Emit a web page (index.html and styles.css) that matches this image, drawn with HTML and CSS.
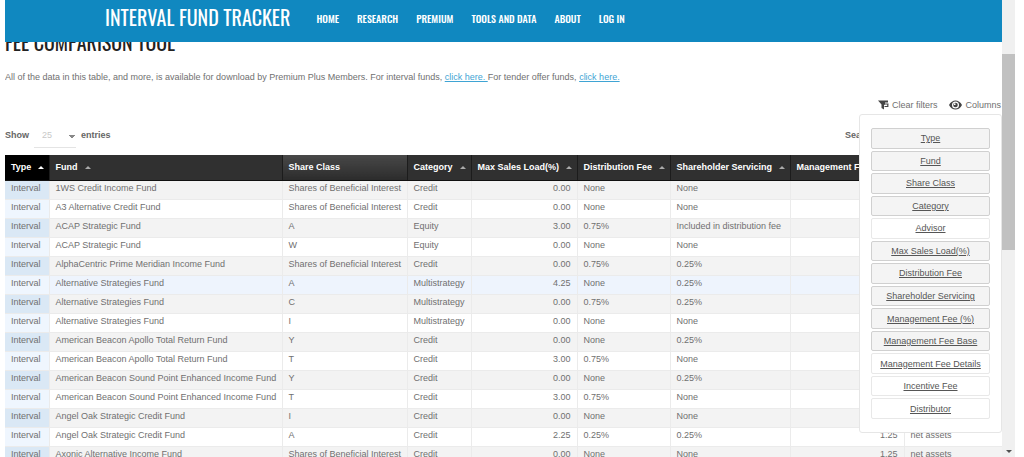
FILE: index.html
```html
<!DOCTYPE html>
<html lang="en">
<head>
<meta charset="utf-8">
<title>Fee Comparison Tool</title>
<link rel="stylesheet" href="styles.css">
</head>
<body>
<div class="window">
  <div class="page">
    <header class="site-header">
      <a class="brand" href="#">INTERVAL FUND TRACKER</a>
      <nav class="nav">
        <a href="#">HOME</a>
        <a href="#">RESEARCH</a>
        <a href="#">PREMIUM</a>
        <a href="#">TOOLS AND DATA</a>
        <a href="#">ABOUT</a>
        <a href="#">LOG IN</a>
      </nav>
    </header>
    <main class="content">
      <h1 class="title">FEE COMPARISON TOOL</h1>
      <p class="intro">All of the data in this table, and more, is available for download by Premium Plus Members. For interval funds, <a href="#">click here. </a>For tender offer funds, <a href="#">click here.</a></p>
      <div class="tools">
        <button class="tool" type="button">
          <svg width="11" height="10" viewBox="0 0 11 10" aria-hidden="true"><path d="M0 0.500h10v2H7v2L6 5v4.500L3.500 8V4.500z" fill="#444"/><path d="M6.500 4h4M6.500 6.500h3.500M9.800 3.500v3.500" fill="none" stroke="#444" stroke-width="1.200"/></svg>
          Clear filters
        </button>
        <button class="tool" type="button">
          <svg width="13" height="10" viewBox="0 0 13 10" aria-hidden="true"><path fill-rule="evenodd" d="M0 5C3-1 10-1 13 5 10 11 3 11 0 5zM6.500 1.500a3.500 3.500 0 1 0 0 7 3.500 3.500 0 1 0 0-7z" fill="#444"/><circle cx="6.500" cy="5" r="2.300" fill="#444"/><circle cx="5.700" cy="4.200" r=".9" fill="#fff"/></svg>
          Columns
        </button>
      </div>
      <div class="controls">
        <label class="length">Show
          <select class="length-select"><option>25</option></select>
          entries</label>
        <span class="search">Search:</span>
      </div>
      <div class="table-wrap">
        <table class="funds">
          <colgroup><col class="c-type"><col class="c-fund"><col class="c-share"><col class="c-cat"><col class="c-load"><col class="c-dist"><col class="c-serv"><col class="c-mgmt"><col class="c-base"></colgroup>
          <thead><tr><th class="active sort">Type</th><th class="sort">Fund</th><th class="plain">Share Class</th><th class="sort">Category</th><th class="sort">Max Sales Load(%)</th><th class="sort">Distribution Fee</th><th class="sort">Shareholder Servicing</th><th>Management Fee (%)</th><th></th></tr></thead>
          <tbody>
            <tr><td>Interval</td><td>1WS Credit Income Fund</td><td>Shares of Beneficial Interest</td><td>Credit</td><td>0.00</td><td>None</td><td>None</td><td></td><td></td></tr>
            <tr><td>Interval</td><td>A3 Alternative Credit Fund</td><td>Shares of Beneficial Interest</td><td>Credit</td><td>0.00</td><td>None</td><td>None</td><td></td><td></td></tr>
            <tr><td>Interval</td><td>ACAP Strategic Fund</td><td>A</td><td>Equity</td><td>3.00</td><td>0.75%</td><td>Included in distribution fee</td><td></td><td></td></tr>
            <tr><td>Interval</td><td>ACAP Strategic Fund</td><td>W</td><td>Equity</td><td>0.00</td><td>None</td><td>None</td><td></td><td></td></tr>
            <tr><td>Interval</td><td>AlphaCentric Prime Meridian Income Fund</td><td>Shares of Beneficial Interest</td><td>Credit</td><td>0.00</td><td>0.75%</td><td>0.25%</td><td></td><td></td></tr>
            <tr class="hover"><td>Interval</td><td>Alternative Strategies Fund</td><td>A</td><td>Multistrategy</td><td>4.25</td><td>None</td><td>0.25%</td><td></td><td></td></tr>
            <tr><td>Interval</td><td>Alternative Strategies Fund</td><td>C</td><td>Multistrategy</td><td>0.00</td><td>0.75%</td><td>0.25%</td><td></td><td></td></tr>
            <tr><td>Interval</td><td>Alternative Strategies Fund</td><td>I</td><td>Multistrategy</td><td>0.00</td><td>None</td><td>None</td><td></td><td></td></tr>
            <tr><td>Interval</td><td>American Beacon Apollo Total Return Fund</td><td>Y</td><td>Credit</td><td>0.00</td><td>None</td><td>0.25%</td><td></td><td></td></tr>
            <tr><td>Interval</td><td>American Beacon Apollo Total Return Fund</td><td>T</td><td>Credit</td><td>3.00</td><td>0.75%</td><td>None</td><td></td><td></td></tr>
            <tr><td>Interval</td><td>American Beacon Sound Point Enhanced Income Fund</td><td>Y</td><td>Credit</td><td>0.00</td><td>None</td><td>0.25%</td><td></td><td></td></tr>
            <tr><td>Interval</td><td>American Beacon Sound Point Enhanced Income Fund</td><td>T</td><td>Credit</td><td>3.00</td><td>0.75%</td><td>None</td><td></td><td></td></tr>
            <tr><td>Interval</td><td>Angel Oak Strategic Credit Fund</td><td>I</td><td>Credit</td><td>0.00</td><td>None</td><td>None</td><td></td><td></td></tr>
            <tr><td>Interval</td><td>Angel Oak Strategic Credit Fund</td><td>A</td><td>Credit</td><td>2.25</td><td>0.25%</td><td>0.25%</td><td>1.25</td><td>net assets</td></tr>
            <tr><td>Interval</td><td>Axonic Alternative Income Fund</td><td>Shares of Beneficial Interest</td><td>Credit</td><td>0.00</td><td>None</td><td>None</td><td>1.25</td><td>net assets</td></tr>
          </tbody>
        </table>
      </div>
      <div class="columns-menu">
        <button class="on" type="button">Type</button>
        <button class="on" type="button">Fund</button>
        <button class="on" type="button">Share Class</button>
        <button class="on" type="button">Category</button>
        <button type="button">Advisor</button>
        <button class="on" type="button">Max Sales Load(%)</button>
        <button class="on" type="button">Distribution Fee</button>
        <button class="on" type="button">Shareholder Servicing</button>
        <button class="on" type="button">Management Fee (%)</button>
        <button class="on" type="button">Management Fee Base</button>
        <button type="button">Management Fee Details</button>
        <button type="button">Incentive Fee</button>
        <button type="button">Distributor</button>
      </div>
    </main>
  </div>
  <div class="scrollbar"><div class="thumb"></div><div class="arrow"></div></div>
</div>
</body>
</html>
```
FILE: styles.css
```css
* { box-sizing: border-box; }
body {
  margin: 0;
  background: #fff;
  color: #707070;
  font: 9px/14px "Liberation Sans", Arial, sans-serif;
}
button, select { font: inherit; color: inherit; }
.window {
  display: grid;
  grid-template-columns: minmax(0, 1fr) 13px;
  height: 100vh;
  padding: 0 9px 0 5px;
  overflow: hidden;
}
.page { position: relative; min-height: 0; overflow: hidden; }
.site-header {
  position: absolute;
  inset: 0 0 auto 0;
  z-index: 3;
  display: flex;
  align-items: center;
  gap: 26px;
  height: 42px;
  padding: 0 100px 8px;
  background: #1088c0;
  font-family: Oswald, "Roboto Condensed", "Liberation Sans Narrow", sans-serif;
}
.site-header a { color: #fff; text-decoration: none; white-space: nowrap; }
.brand { font-size: 20px; line-height: 24px; }
.nav { display: flex; gap: 18px; padding-top: 4px; font-size: 10px; font-weight: 500; }
.title {
  margin: 0;
  padding-top: 30px;
  color: #222;
  font: 400 20px/24px Oswald, "Roboto Condensed", "Liberation Sans Narrow", sans-serif;
}
.intro { margin: 16px 0 0; }
.intro a { color: #3fa4d4; }
.tools { display: flex; justify-content: flex-end; gap: 12px; margin-top: 14px; }
.tool { display: flex; align-items: center; gap: 3px; padding: 0; border: 0; background: none; }
.tool:last-child { margin-right: 1px; }
.controls { display: flex; justify-content: space-between; height: 43px; padding: 16px 124px 0 0; color: #666; font-weight: 700; }
.length { display: flex; align-items: flex-start; gap: 5px; }
.length-select {
  width: 42px;
  height: 20px;
  padding: 0 0 5px 8px;
  border: 0;
  border-bottom: 1px solid #e4e4e4;
  appearance: none;
  background: conic-gradient(from -45deg at 50% 100%, #888 90deg, transparent 0) 35px 7px / 6px 3px no-repeat;
  color: #c8c8c8;
  font-weight: 400;
}
.table-wrap { overflow: hidden; }
.funds { width: 1050px; border-collapse: collapse; table-layout: fixed; }
.c-type { width: 44px; }
.c-fund { width: 233px; }
.c-share { width: 125px; }
.c-cat { width: 64px; }
.c-load { width: 106px; }
.c-dist { width: 93px; }
.c-serv { width: 120px; }
.c-mgmt { width: 114px; }
th {
  height: 25px;
  padding: 0 6px;
  border-right: 1px solid #1c1c1c;
  border-bottom: 1px solid #111;
  background: #303030;
  color: #fff;
  text-align: left;
  white-space: nowrap;
}
th.active { background: #000; }
th.plain { background: linear-gradient(#484848, #2c2c2c); }
.sort::after {
  content: "";
  display: inline-block;
  margin-left: 7px;
  border: solid transparent;
  border-width: 0 3px 3px;
  border-bottom-color: #aaa;
  vertical-align: 1px;
}
.active.sort::after { border-bottom-color: #fff; }
td {
  height: 19px;
  padding: 0 6px 3px;
  border-right: 1px solid #ebebeb;
  border-bottom: 1px solid #ebebeb;
  white-space: nowrap;
}
td:nth-child(5), td:nth-child(8) { text-align: right; }
tbody tr:nth-child(odd) { background: #f3f3f3; }
td:first-child { background: #eff6fe; }
tr:nth-child(odd) td:first-child { background: #dae8f5; }
tbody .hover { background: #eef4fd; }
.columns-menu {
  position: absolute;
  top: 114px;
  right: 0;
  bottom: 24px;
  z-index: 2;
  display: grid;
  grid-auto-rows: minmax(0, 1fr);
  gap: 2px;
  width: 143px;
  padding: 13px 11px 13px;
  border: 1px solid #e6e6e6;
  border-radius: 3px;
  background: #fff;
}
.columns-menu button {
  padding: 0;
  border: 1px solid #e8e8e8;
  border-radius: 2px;
  background: #fff;
  color: #555;
  text-decoration: underline;
}
.columns-menu .on { border-color: #d0d0d0; background: #f4f4f4; }
.scrollbar { display: flex; flex-direction: column; justify-content: space-between; align-items: center; padding: 54px 0 4px; background: #f0f0f0; }
.thumb { width: 100%; height: 196px; background: #c1c1c1; }
.arrow { border: solid transparent; border-width: 3px 3px 0; border-top-color: #505050; }
```
